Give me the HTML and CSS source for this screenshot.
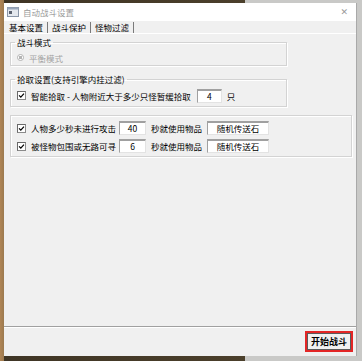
FILE: index.html
```html
<!DOCTYPE html>
<html lang="zh-CN">
<head>
  <meta charset="UTF-8" />
  <title>自动战斗设置</title>
  <link rel="stylesheet" href="styles.css">
</head>
<body>
  <div class="window">
    <div class="titlebar">
      <svg class="app-icon" viewBox="0 0 12 10" aria-hidden="true">
        <rect x="0.5" y="0.5" width="11" height="9" fill="#e4e8ee" stroke="#8a96a8"/>
        <rect x="0.5" y="0.5" width="11" height="2" fill="#9aa8bc"/>
        <rect x="2" y="4" width="3" height="3" fill="#5b6270"/>
      </svg>
      <span class="title">自动战斗设置</span>
      <span class="close">✕</span>
    </div>

    <div class="tabs">
      <span class="tab active">基本设置</span>
      <span class="tab">战斗保护</span>
      <span class="tab">怪物过滤</span>
    </div>

    <div class="page">
      <fieldset class="group narrow g1">
        <legend>战斗模式</legend>
        <div class="row disabled">
          <span class="radio"></span>
          <span>平衡模式</span>
        </div>
      </fieldset>

      <fieldset class="group narrow g2">
        <legend>拾取设置(支持引擎内挂过滤)</legend>
        <div class="row">
          <span class="check"><svg viewBox="0 0 8 8"><path d="M1.2 3.8 L3.2 5.8 L6.8 1.8" fill="none" stroke="#000" stroke-width="1.4"/></svg></span>
          <span>智能拾取 - 人物附近大于多少只怪暂缓拾取</span>
          <span class="field num">4</span>
          <span>只</span>
        </div>
      </fieldset>

      <fieldset class="group g3">
        <div class="row">
          <span class="check"><svg viewBox="0 0 8 8"><path d="M1.2 3.8 L3.2 5.8 L6.8 1.8" fill="none" stroke="#000" stroke-width="1.4"/></svg></span>
          <span class="label">人物多少秒未进行攻击</span>
          <span class="field num">40</span>
          <span>秒就使用物品</span>
          <span class="field item">随机传送石</span>
        </div>
        <div class="row">
          <span class="check"><svg viewBox="0 0 8 8"><path d="M1.2 3.8 L3.2 5.8 L6.8 1.8" fill="none" stroke="#000" stroke-width="1.4"/></svg></span>
          <span class="label">被怪物包围或无路可寻</span>
          <span class="field num">6</span>
          <span>秒就使用物品</span>
          <span class="field item">随机传送石</span>
        </div>
      </fieldset>

      <div class="footer">
        <button class="start">开始战斗</button>
      </div>
    </div>
  </div>
</body>
</html>
```

FILE: styles.css
```css
html {
  height: 100%;
  background: linear-gradient(to right, #b08555 0, #9c7a4f 4px, #3f3525 4px, #4b3f2b 245px, #c9c9c7 245px);
}
body {
  height: 100%;
  margin: 0;
  overflow: hidden;
  font-family: "Noto Sans CJK SC", sans-serif;
  font-size: 8.5px;
  color: #000;
}
.window {
  margin: 3px 0 0 4px;
  width: 352px;
  height: 353px;
  background-color: #f0f0f0;
  border-right: 1px solid #a9a9a9;
  display: flex;
  flex-direction: column;
}
.titlebar {
  height: 18px;
  background-color: #ffffff;
  display: flex;
  align-items: center;
  padding: 0 8px 0 3px;
}
.app-icon {
  width: 12px;
  height: 10px;
  margin-right: 4px;
}
.title {
  color: #9a9a9a;
  flex: 1;
  line-height: 1;
}
.close {
  color: #9a9a9a;
  font-family: "DejaVu Sans", sans-serif;
  font-size: 9px;
}
.tabs {
  height: 12px;
  display: flex;
  align-items: center;
  padding-left: 1px;
  border-bottom: 1px solid #ffffff;
}
.tab {
  padding: 0 4px 0 4px;
  line-height: 11px;
  border-right: 1px solid #7a7a7a;
}
.page {
  flex: 1;
  display: flex;
  flex-direction: column;
  padding: 2px 4px 0 6px;
}
.group {
  margin: 0;
  padding: 0 0 0 6px;
  border: 1px solid #d3d3d3;
  box-shadow: inset 1px 1px 0 #ffffff, 1px 1px 0 #ffffff;
  box-sizing: border-box;
}
.group legend {
  padding: 0 2px;
  margin-left: -2px;
  line-height: 12px;
}
.narrow {
  width: 277px;
}
.g1 {
  height: 30px;
}
.g2 {
  margin-top: 7px;
  height: 34px;
}
.g3 {
  margin-top: 8px;
  height: 42px;
  padding-top: 3px;
}
.row {
  display: flex;
  align-items: center;
  gap: 5px;
  height: 15px;
  line-height: 12px;
  white-space: nowrap;
}
.g1 .row {
  margin-top: 2px;
}
.g2 .row {
  margin-top: 3px;
}
.g3 .row {
  height: 18px;
}
.disabled {
  color: #a3a3a3;
}
.radio {
  width: 5px;
  height: 5px;
  border: 1px solid #b4b4b4;
  border-radius: 50%;
  background: radial-gradient(circle, #b4b4b4 0 1.5px, #ffffff 2px);
}
.check {
  width: 7px;
  height: 7px;
  border: 1px solid #8a8a8a;
  border-left-color: #6a6a6a;
  border-top-color: #6a6a6a;
  background-color: #ffffff;
  display: flex;
}
.check svg {
  width: 7px;
  height: 7px;
}
.label {
  width: 83px;
}
.field {
  height: 11px;
  line-height: 11px;
  background-color: #ffffff;
  border: 1px solid #e3e3e3;
  border-top: 2px solid #a0a0a0;
  border-left-color: #a0a0a0;
  text-align: center;
}
.num {
  width: 25px;
}
.g2 .num {
  width: 23px;
  margin-left: 1px;
}
.item {
  width: 60px;
}
.footer {
  margin-top: auto;
  margin-left: -6px;
  margin-right: -4px;
  border-top: 1px solid #a0a0a0;
  box-shadow: inset 0 1px 0 #ffffff;
  display: flex;
  justify-content: flex-end;
  padding: 4px 3px 4px 0;
}
.start {
  width: 48px;
  height: 21px;
  padding: 0;
  font-family: "Noto Sans CJK SC", sans-serif;
  font-size: 9px;
  font-weight: bold;
  color: #000;
  background-color: #f0f0f0;
  border: 2px solid #e32626;
  box-shadow: inset 0 0 0 1px #5a5a5a;
}
```
